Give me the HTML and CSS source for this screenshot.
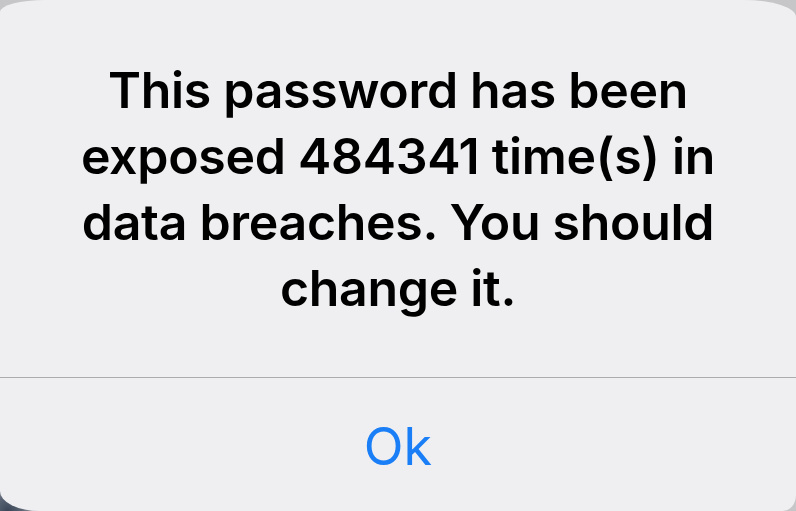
FILE: index.html
```html
<!DOCTYPE html>
<html lang="en">
<head>
<meta charset="utf-8">
<title>Alert</title>
<link rel="stylesheet" href="styles.css">
</head>
<body>
<div class="alert">
  <div class="message">
    <p class="text">This password has been exposed 484341 time(s) in data breaches. You should change it.</p>
  </div>
  <div class="actions">
    <span class="btn">Ok</span>
  </div>
</div>
</body>
</html>
```

FILE: styles.css
```css
html, body {
  margin: 0;
  padding: 0;
  width: 796px;
  height: 511px;
  overflow: hidden;
  background: #c6c6c8;
}
body {
  background: radial-gradient(circle at 8px 511px, #3a4658 0, #5a6474 14px, #c6c6c8 34px);
}
.alert {
  width: 796px;
  height: 511px;
  box-sizing: border-box;
  background: #efeff1;
  border-radius: 45px 52px 13px 40px / 12px 17px 16px 20px;
  display: flex;
  flex-direction: column;
  font-family: Inter, "Noto Sans", sans-serif;
}
.message {
  height: 378px;
  box-sizing: border-box;
  padding: 57px 60px 0;
  border-bottom: 1px solid #acacae;
}
.text {
  margin: 0;
  text-align: center;
  font-size: 50px;
  font-weight: 600;
  line-height: 66px;
  color: #000;
  letter-spacing: -0.3px;
}
.actions {
  flex: 1;
  display: flex;
  align-items: center;
  justify-content: center;
}
.btn {
  color: #1a7ef6;
  font-size: 52px;
  font-weight: 400;
  line-height: 1;
  margin-top: 4px;
}
```
